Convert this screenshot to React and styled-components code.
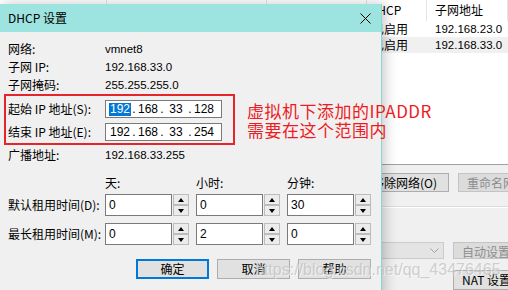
import styled, { createGlobalStyle } from "styled-components";

const GlobalStyle = createGlobalStyle`
  html, body {
    margin: 0;
    padding: 0;
  }
  body {
    width: 508px;
    height: 290px;
    overflow: hidden;
    background: #f0f0f0;
    color: #000;
    font-family: "Noto Sans CJK SC", "Liberation Sans", sans-serif;
    font-size: 12px;
  }
`;

const Desktop = styled.div`
  position: relative;
  width: 508px;
  height: 290px;
  overflow: hidden;
`;

/* ---------- window behind the dialog ---------- */

const BackWindow = styled.div`
  display: flex;
  flex-direction: column;
  height: 100%;
  background: #f0f0f0;
`;

const ListView = styled.div`
  height: 171px;
  box-sizing: border-box;
  background: #fff;
  border-bottom: 1px solid #a0a0a0;
`;

const ListRow = styled.div`
  display: grid;
  grid-template-columns: 107px 160px 100px 60px 1fr;
  height: ${({ $header }) => ($header ? "21px" : "16px")};
  line-height: ${({ $header }) => ($header ? "19px" : "16px")};
  background: ${({ $shaded }) => ($shaded ? "#f0f0f0" : "transparent")};
  white-space: nowrap;
`;

const ListCell = styled.div`
  padding-left: ${({ $pad }) => $pad ?? 6}px;
  border-right: ${({ $header }) => ($header ? "1px solid #e5e5e5" : "none")};
  font-family: ${({ $num }) =>
    $num ? '"Liberation Sans", sans-serif' : '"Noto Sans CJK SC", sans-serif'};
  font-size: ${({ $num }) => ($num ? "11.5px" : "12px")};
  overflow: hidden;
`;

const PanelRow = styled.div`
  display: flex;
  gap: ${({ $gap }) => $gap || 9}px;
  padding-left: ${({ $indent }) => $indent}px;
  margin-top: ${({ $top }) => $top}px;
  white-space: nowrap;
`;

const Groove = styled.div`
  margin-top: 14px;
  height: 1px;
  background: #dcdcdc;
  border-bottom: 1px solid #fff;
`;

const WinButton = styled.div`
  flex: none;
  width: ${({ $w }) => $w}px;
  height: ${({ $h }) => $h || 19}px;
  box-sizing: border-box;
  border: 1px solid ${({ $disabled }) => ($disabled ? "#c4c4c4" : "#adadad")};
  background: ${({ $disabled }) => ($disabled ? "#dcdcdc" : "#e1e1e1")};
  color: ${({ $disabled }) => ($disabled ? "#8c8c8c" : "#000")};
  text-align: ${({ $left }) => ($left ? "left" : "center")};
  padding-left: ${({ $left }) => ($left ? "8px" : "0")};
  line-height: 17px;
`;

const Combo = styled.div`
  flex: none;
  width: 120px;
  height: 17px;
  box-sizing: border-box;
  border: 1px solid #cccccc;
  background: #e4e4e4;
  display: flex;
  justify-content: flex-end;
  align-items: center;
  padding-right: 4px;
`;

/* ---------- dialog ---------- */

const Dialog = styled.div`
  position: absolute;
  left: 0;
  top: 4px;
  width: 382px;
  height: 300px;
  box-sizing: border-box;
  background: #f0f0f0;
  border-right: 1px solid #86d6d1;
  box-shadow: 3px 0 12px rgba(0, 0, 0, 0.22);
`;

const TitleBar = styled.div`
  height: 28px;
  background: #9de3df;
  display: flex;
  align-items: center;
  justify-content: space-between;
  padding: 0 10px 0 8px;
`;

const Title = styled.span`
  font-size: 12px;
  line-height: 14px;
`;

const Body = styled.div`
  padding: 8px 10px 0 8px;
`;

const InfoRow = styled.div`
  display: grid;
  grid-template-columns: 97px 1fr;
  align-items: center;
  height: ${({ $h }) => $h || 18}px;
  line-height: 14px;
`;

const Value = styled.span`
  font-family: "Liberation Sans", sans-serif;
  font-size: 11.5px;
`;

const RangeBox = styled.div`
  margin-left: -4px;
  width: 231px;
  height: 51px;
  box-sizing: border-box;
  border: 2px solid #e5252b;
  padding: 4px 0 0 2px;
  display: flex;
  flex-direction: column;
  gap: 5px;
`;

const FieldRow = styled.div`
  display: grid;
  grid-template-columns: 97px 117px;
  align-items: center;
  height: 18px;
  line-height: 14px;
`;

const IpField = styled.div`
  height: 18px;
  box-sizing: border-box;
  border: 1px solid #7a7a7a;
  background: #fff;
  display: flex;
  align-items: center;
  padding-left: 3px;
  font-family: "Liberation Sans", sans-serif;
  font-size: 12px;
`;

const Octet = styled.span`
  width: 22px;
  text-align: center;
`;

const Selected = styled.span`
  display: inline-block;
  line-height: 13px;
  padding: 0 1px;
  background: #0078d7;
  color: #fff;
`;

const Dot = styled.span`
  width: 6px;
  text-align: center;
`;

const LeaseRow = styled.div`
  display: grid;
  grid-template-columns: 90px 84px 84px 84px;
  column-gap: 7px;
  align-items: center;
  margin-top: ${({ $top }) => $top}px;
  height: ${({ $h }) => $h}px;
  line-height: 14px;
  white-space: nowrap;
`;

const SpinField = styled.div`
  display: flex;
  gap: 1px;
  height: 22px;
`;

const Edit = styled.div`
  width: 67px;
  box-sizing: border-box;
  border: 1px solid #7a7a7a;
  background: #fff;
  padding: 3px 0 0 3px;
  font-family: "Liberation Sans", sans-serif;
  font-size: 12px;
  line-height: 14px;
`;

const Spinner = styled.div`
  width: 16px;
  display: flex;
  flex-direction: column;
`;

const SpinButton = styled.div`
  flex: 1;
  box-sizing: border-box;
  border: 1px solid #bcbcbc;
  background: #ececec;
  display: flex;
  align-items: center;
  justify-content: center;
`;

const Arrow = styled.span`
  width: 0;
  height: 0;
  border-left: 3px solid transparent;
  border-right: 3px solid transparent;
  border-${({ $down }) => ($down ? "top" : "bottom")}: 4px solid #000;
`;

const ButtonBar = styled.div`
  display: flex;
  justify-content: flex-end;
  gap: 8px;
  margin-top: 14px;
`;

const DlgButton = styled.div`
  width: 73px;
  height: 20px;
  box-sizing: border-box;
  border: ${({ $primary }) => ($primary ? "2px solid #0078d7" : "1px solid #adadad")};
  background: #e1e1e1;
  display: flex;
  align-items: center;
  justify-content: center;
  line-height: 14px;
`;

/* ---------- overlays on the screenshot ---------- */

const Annotation = styled.div`
  position: absolute;
  left: 247px;
  top: 101px;
  color: #ed1c24;
  font-size: 17px;
  letter-spacing: 0.5px;
  line-height: 19px;
  white-space: nowrap;
`;

const Watermark = styled.div`
  position: absolute;
  left: 255px;
  top: 261px;
  font-family: "Liberation Sans", sans-serif;
  font-size: 16px;
  color: rgba(185, 185, 185, 0.65);
  text-shadow: 1px 1px 0 rgba(255, 255, 255, 0.55);
  white-space: nowrap;
`;

const SpinBox = ({ value }) => (
  <SpinField>
    <Edit>{value}</Edit>
    <Spinner>
      <SpinButton>
        <Arrow />
      </SpinButton>
      <SpinButton>
        <Arrow $down />
      </SpinButton>
    </Spinner>
  </SpinField>
);

const IpAddress = ({ parts, selectFirst }) => (
  <IpField>
    {parts.map((p, i) => (
      <span key={i} style={{ display: "contents" }}>
        {i > 0 && <Dot>.</Dot>}
        <Octet>{i === 0 && selectFirst ? <Selected>{p}</Selected> : p}</Octet>
      </span>
    ))}
  </IpField>
);

const App = () => {
  return (
    <Desktop>
      <GlobalStyle />
      <BackWindow>
        <ListView>
          <ListRow $header>
            <ListCell $header>名称</ListCell>
            <ListCell $header>类型</ListCell>
            <ListCell $header>外部连接</ListCell>
            <ListCell $header $pad={2}>DHCP</ListCell>
            <ListCell $header $pad={8}>子网地址</ListCell>
          </ListRow>
          <ListRow>
            <ListCell>VMnet1</ListCell>
            <ListCell>仅主机...</ListCell>
            <ListCell>-</ListCell>
            <ListCell $pad={5}>已启用</ListCell>
            <ListCell $pad={8} $num>192.168.23.0</ListCell>
          </ListRow>
          <ListRow $shaded>
            <ListCell>VMnet8</ListCell>
            <ListCell>NAT 模式</ListCell>
            <ListCell>NAT 模式</ListCell>
            <ListCell $pad={5}>已启用</ListCell>
            <ListCell $pad={8} $num>192.168.33.0</ListCell>
          </ListRow>
        </ListView>
        <PanelRow $indent={288} $top={8}>
          <WinButton $w={63}>添加网络(E)...</WinButton>
          <WinButton $w={89}>移除网络(O)</WinButton>
          <WinButton $w={96} $disabled $left>
            重命名网络(W)...
          </WinButton>
        </PanelRow>
        <Groove />
        <PanelRow $indent={324} $top={34}>
          <Combo>
            <svg width="9" height="6" viewBox="0 0 9 6">
              <polyline points="0.5,0.5 4.5,4.5 8.5,0.5" fill="none" stroke="#a0a0a0" />
            </svg>
          </Combo>
          <WinButton $w={90} $h={17} $disabled $left>
            自动设置(U)...
          </WinButton>
        </PanelRow>
        <PanelRow $indent={453} $top={11}>
          <WinButton $w={90} $h={20} $left>
            NAT 设置(S)...
          </WinButton>
        </PanelRow>
      </BackWindow>

      <Dialog>
        <TitleBar>
          <Title>DHCP 设置</Title>
          <svg width="11" height="11" viewBox="0 0 11 11">
            <path d="M0.5 0.5 L10.5 10.5 M10.5 0.5 L0.5 10.5" stroke="#000" strokeWidth="1" />
          </svg>
        </TitleBar>
        <Body>
          <InfoRow>
            <span>网络:</span>
            <Value>vmnet8</Value>
          </InfoRow>
          <InfoRow>
            <span>子网 IP:</span>
            <Value>192.168.33.0</Value>
          </InfoRow>
          <InfoRow>
            <span>子网掩码:</span>
            <Value>255.255.255.0</Value>
          </InfoRow>
          <RangeBox>
            <FieldRow>
              <span>起始 IP 地址(S):</span>
              <IpAddress parts={["192", "168", "33", "128"]} selectFirst />
            </FieldRow>
            <FieldRow>
              <span>结束 IP 地址(E):</span>
              <IpAddress parts={["192", "168", "33", "254"]} />
            </FieldRow>
          </RangeBox>
          <InfoRow $h={20}>
            <span>广播地址:</span>
            <Value>192.168.33.255</Value>
          </InfoRow>
          <LeaseRow $top={9} $h={18}>
            <span />
            <span>天:</span>
            <span>小时:</span>
            <span>分钟:</span>
          </LeaseRow>
          <LeaseRow $top={2} $h={22}>
            <span>默认租用时间(D):</span>
            <SpinBox value="0" />
            <SpinBox value="0" />
            <SpinBox value="30" />
          </LeaseRow>
          <LeaseRow $top={7} $h={22}>
            <span>最长租用时间(M):</span>
            <SpinBox value="0" />
            <SpinBox value="2" />
            <SpinBox value="0" />
          </LeaseRow>
          <ButtonBar>
            <DlgButton $primary>确定</DlgButton>
            <DlgButton>取消</DlgButton>
            <DlgButton>帮助</DlgButton>
          </ButtonBar>
        </Body>
      </Dialog>

      <Annotation>
        虚拟机下添加的IPADDR
        <br />
        需要在这个范围内
      </Annotation>
      <Watermark>https://blog.csdn.net/qq_43476465</Watermark>
    </Desktop>
  );
};

export default App;
